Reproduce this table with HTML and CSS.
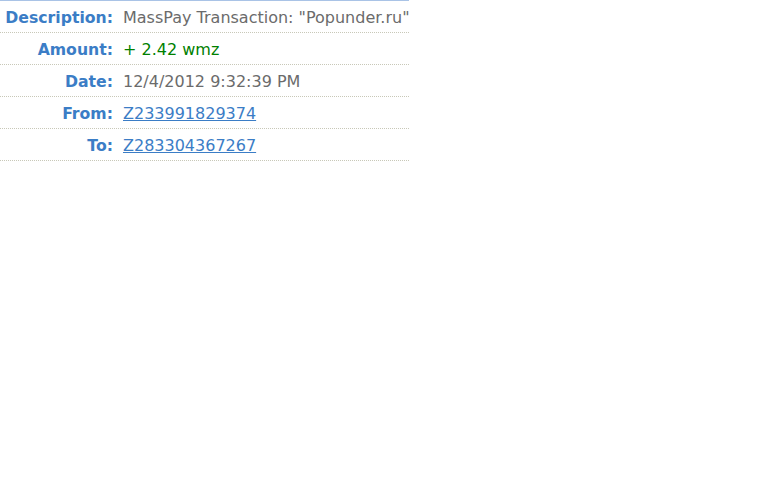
FILE: index.html
```html
<!DOCTYPE html>
<html>
<head>
<meta charset="utf-8">
<link rel="stylesheet" href="styles.css">
</head>
<body>
<div class="details">
  <div class="row"><div class="label">Description:</div><div class="value">MassPay Transaction: "Popunder.ru"</div></div>
  <div class="row"><div class="label">Amount:</div><div class="value amount">+ 2.42 wmz</div></div>
  <div class="row"><div class="label">Date:</div><div class="value">12/4/2012 9:32:39 PM</div></div>
  <div class="row"><div class="label">From:</div><div class="value"><a href="#">Z233991829374</a></div></div>
  <div class="row"><div class="label">To:</div><div class="value"><a href="#">Z283304367267</a></div></div>
</div>
</body>
</html>
```
FILE: styles.css
```css
body {
  margin: 0;
  background: #fff;
  font-family: "DejaVu Sans", Verdana, sans-serif;
  font-size: 16px;
}
.details {
  width: 409px;
  overflow: hidden;
  border-top: 1px solid #a9c3e6;
}
.row {
  display: flex;
  height: 32px;
  align-items: center;
  padding-top: 1px;
  box-sizing: border-box;
  border-bottom: 1px dotted #c8c8b8;
  white-space: nowrap;
}
.label {
  width: 113px;
  flex: none;
  text-align: right;
  font-weight: bold;
  font-size: 15.7px;
  color: #3b7dc6;
  padding-right: 10px;
  box-sizing: content-box;
}
.value {
  color: #6b6b6b;
}
.amount {
  color: #008000;
}
.value a {
  color: #3b7dc6;
}
```
